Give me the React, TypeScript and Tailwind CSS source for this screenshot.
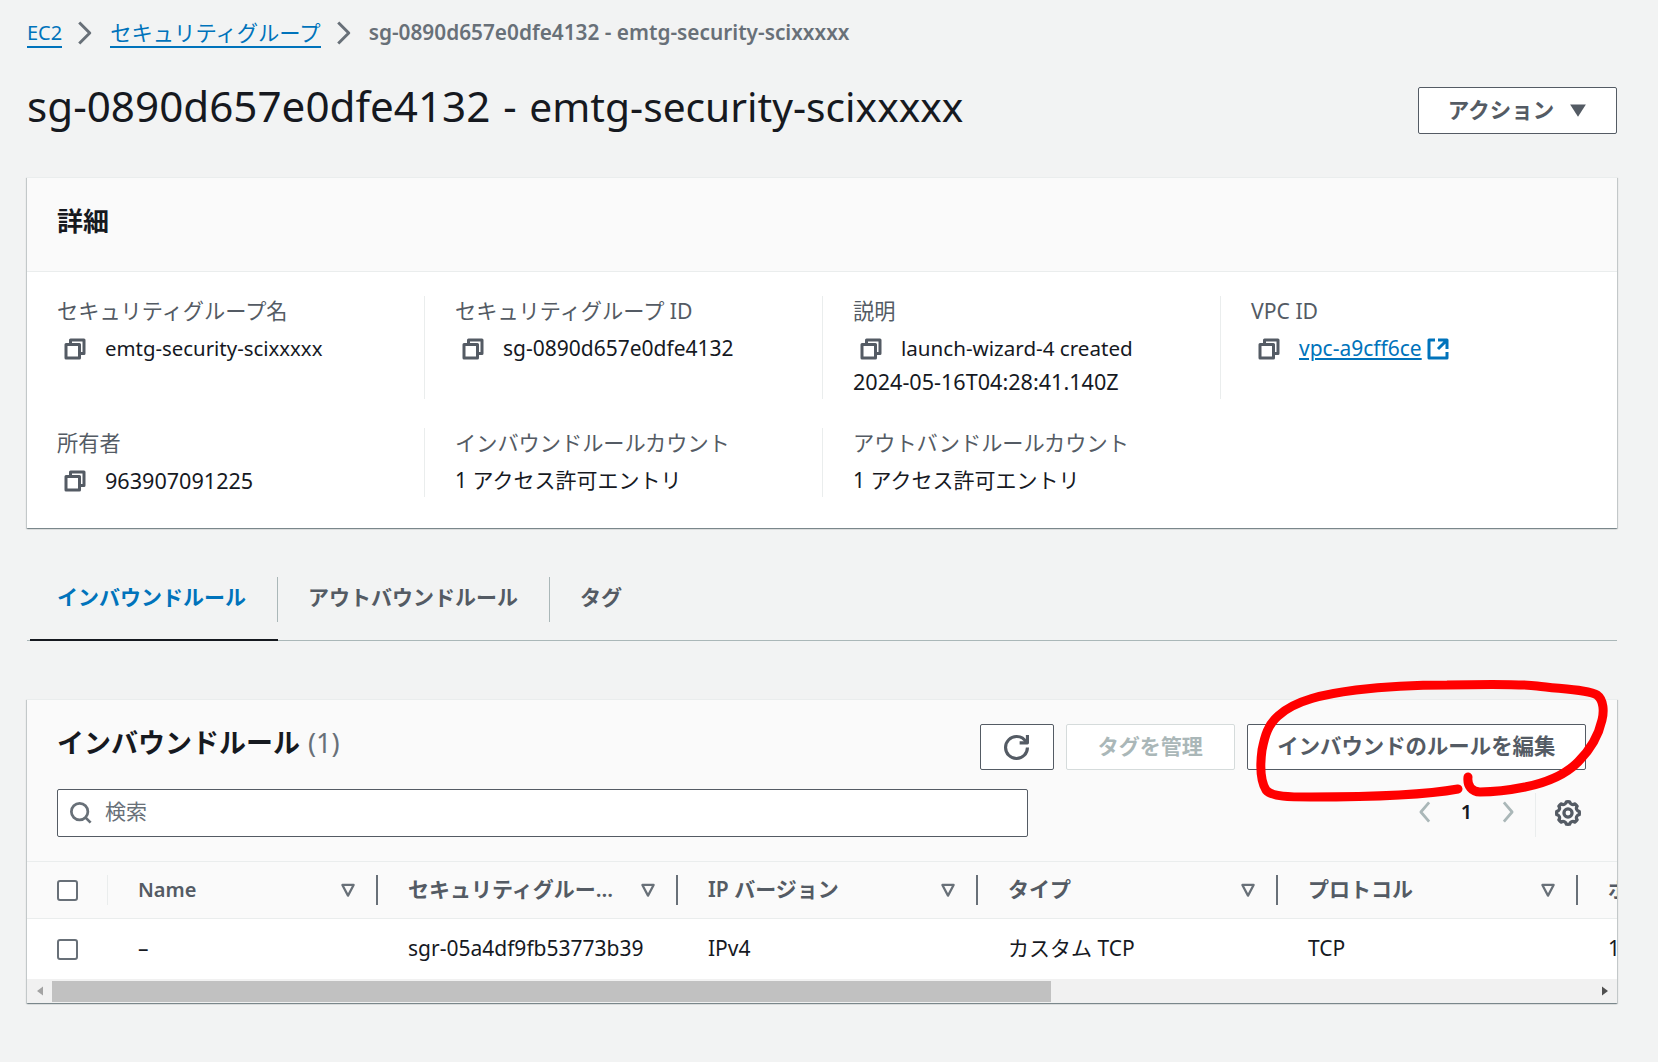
import { ReactNode } from 'react'

const FONT = "font-['Noto_Sans','Noto_Sans_CJK_JP',sans-serif]"
const CARD_SHADOW = 'shadow-[0_1px_1px_0_rgba(0,28,36,0.3),1px_1px_1px_0_rgba(0,28,36,0.15),-1px_1px_1px_0_rgba(0,28,36,0.15)]'

function Icon({ children, className }: { children: ReactNode; className?: string }) {
  return (
    <svg
      viewBox="0 0 16 16"
      fill="none"
      stroke="currentColor"
      strokeWidth={2}
      strokeLinejoin="round"
      className={className}
    >
      {children}
    </svg>
  )
}

function CopyIcon() {
  return (
    <Icon className="w-[24px] h-[24px] shrink-0 text-[#545b64]">
      <path d="M2 5h9v9H2z" />
      <path d="M5 5V2h9v9h-3" />
    </Icon>
  )
}

function ExternalIcon() {
  return (
    <Icon className="w-[24px] h-[24px] shrink-0">
      <path d="M14 8.01v-6H8M14.02 2 8 8.01M6 2.01H2v12h12v-3.99" />
    </Icon>
  )
}

function Chevron() {
  return (
    <Icon className="w-[24px] h-[24px] text-[#687078]">
      <path d="m3.5 1 7 7-7 7" />
    </Icon>
  )
}

function FilterIcon() {
  return (
    <Icon className="w-[18px] h-[18px] shrink-0 text-[#687078]">
      <path d="M3 3.5h10L8 13z" />
    </Icon>
  )
}

function Checkbox() {
  return <div className="w-[21px] h-[21px] rounded-[3px] border-2 border-[#687078] bg-white" />
}

// Details card cell
function Field({ label, children, divider = true }: { label: string; children: ReactNode; divider?: boolean }) {
  return (
    <div className={`px-[30px] ${divider ? 'border-r border-[#eaeded]' : ''}`}>
      <div className="h-[30px] flex items-center text-[21.2px] text-[#545b64] whitespace-nowrap">{label}</div>
      <div className="mt-[6px] text-[21px] leading-[33px] text-[#16191f]">{children}</div>
    </div>
  )
}

function CopyValue({ children }: { children: ReactNode }) {
  return (
    <span className="inline-flex items-center gap-[18px] pl-[6px] align-top h-[33px] whitespace-nowrap">
      <CopyIcon />
      {children}
    </span>
  )
}

const COLUMNS = ['セキュリティグルー...', 'IP バージョン', 'タイプ', 'プロトコル']
const CELLS = ['sgr-05a4df9fb53773b39', 'IPv4', 'カスタム TCP', 'TCP']

function HeaderCell({ label }: { label: string }) {
  return (
    <div className="w-[300px] shrink-0 h-[30px] pl-[30px] pr-[19px] flex items-center justify-between border-r-2 border-[#687078] text-[21px] font-semibold text-[#545b64]">
      <span className="whitespace-nowrap">{label}</span>
      <FilterIcon />
    </div>
  )
}

export default function App() {
  return (
    <div className={`${FONT} relative min-h-screen bg-[#f2f3f3] pl-[27px] pr-[41px] pt-[18px] pb-[57px]`}>
      {/* Breadcrumb */}
      <nav className="h-[30px] flex items-center text-[21.3px] whitespace-nowrap">
        <a className="text-[#0073bb] border-b-2 border-[#0073bb] leading-[27px] text-[20px]">EC2</a>
        <span className="mx-[12px] flex"><Chevron /></span>
        <a className="text-[#0073bb] border-b-2 border-[#0073bb] leading-[27px]">セキュリティグループ</a>
        <span className="mx-[12px] flex"><Chevron /></span>
        <span className="font-semibold text-[20.8px] text-[#687078]">sg-0890d657e0dfe4132 - emtg-security-scixxxxx</span>
      </nav>

      {/* Page title */}
      <div className="mt-[39px] h-[46px] flex items-center justify-between">
        <h1 className="pb-[8px] text-[41.6px] text-[#16191f] whitespace-nowrap">
          <span className="text-[42.2px]">sg-0890d657e0dfe4132</span>
          <span className="mx-[2px]"> - </span>
          <span className="text-[40.7px]">emtg-security-scixxxxx</span>
        </h1>
        <button className="w-[199px] h-[47px] flex items-center justify-center gap-[15px] bg-white border border-[#545b64] rounded-[2px] text-[21.5px] font-semibold text-[#545b64]">
          アクション
          <svg viewBox="0 0 16 16" className="w-[18px] h-[18px] text-[#545b64]" fill="currentColor"><path d="M1 3h14L8 14z" /></svg>
        </button>
      </div>

      {/* Details */}
      <section className={`mt-[44px] bg-white ${CARD_SHADOW}`}>
        <div className="h-[95px] pl-[30px] pb-[6px] flex items-center bg-[#fafafa] border-b border-[#eaeded] border-t border-t-[#eaeded]">
          <h2 className="text-[26px] font-bold text-[#16191f]">詳細</h2>
        </div>
        <div className="h-[256px] pt-[24px]">
          <div className="grid grid-cols-[398px_398px_398px_1fr] h-[102px]">
            <Field label="セキュリティグループ名"><CopyValue><span className="text-[20.4px]">emtg-security-scixxxxx</span></CopyValue></Field>
            <Field label="セキュリティグループ ID"><CopyValue>sg-0890d657e0dfe4132</CopyValue></Field>
            <Field label="説明">
              <CopyValue><span className="text-[20.6px]">launch-wizard-4 created</span></CopyValue>
              <br />
              <span className="text-[21.6px]">2024-05-16T04:28:41.140Z</span>
            </Field>
            <Field label="VPC ID" divider={false}>
              <CopyValue>
                <a className="flex items-center gap-[4px] text-[#0073bb]">
                  <span className="underline">vpc-a9cff6ce </span>
                  <ExternalIcon />
                </a>
              </CopyValue>
            </Field>
          </div>
          <div className="mt-[30px] grid grid-cols-[398px_398px_398px_1fr] h-[69px]">
            <Field label="所有者"><CopyValue><span className="text-[21.6px]">963907091225</span></CopyValue></Field>
            <Field label="インバウンドルールカウント">1 アクセス許可エントリ</Field>
            <Field label="アウトバンドルールカウント" divider={false}>1 アクセス許可エントリ</Field>
          </div>
        </div>
      </section>

      {/* Tabs */}
      <div className="mt-[49px] h-[64px] flex items-start border-b border-[#aab7b8] text-[21px] font-semibold whitespace-nowrap">
        <div className="ml-[3px] w-[248px] h-[64px] border-b-2 border-[#16191f] -mb-px">
          <div className="h-[45px] pl-[27px] pb-[4px] flex items-center text-[#0073bb] border-r border-[#aab7b8]">インバウンドルール</div>
        </div>
        <div className="w-[272px] h-[45px] pl-[30px] pb-[4px] flex items-center text-[#545b64] border-r border-[#aab7b8]">アウトバウンドルール</div>
        <div className="pl-[30px] pb-[4px] h-[45px] flex items-center text-[#545b64]">タグ</div>
      </div>

      {/* Inbound rules table */}
      <section className={`mt-[58px] bg-white overflow-hidden ${CARD_SHADOW}`}>
        <div className="h-[163px] bg-[#fafafa] border-t border-[#eaeded] border-b pl-[30px] pr-[31px] pt-[24px] flex justify-between">
          <div className="w-[971px]">
            <h2 className="h-[46px] pb-[8px] flex items-center text-[27px] font-bold text-[#16191f] whitespace-nowrap">
              インバウンドルール
              <span className="ml-[8px] font-normal text-[#687078]">(1)</span>
            </h2>
            <div className="mt-[19px] h-[48px] flex items-center gap-[13px] px-[12px] bg-white border border-[#545b64] rounded-[2px] text-[21px] text-[#687078]">
              <Icon className="w-[22px] h-[22px] text-[#687078]">
                <circle cx="7" cy="7" r="6" />
                <path d="m11 11 4 4" />
              </Icon>
              <span className="pb-[2px]">検索</span>
            </div>
          </div>
          <div className="w-[606px] -ml-[49px]">
            <div className="h-[46px] flex justify-end gap-[12px] text-[21px] font-semibold">
              <button className="w-[74px] flex items-center justify-center bg-white border border-[#545b64] rounded-[2px] text-[#545b64]">
                <Icon className="w-[25px] h-[25px]">
                  <path d="M10 5h5V0" />
                  <path d="M15 8a6.957 6.957 0 0 1-7 7 6.957 6.957 0 0 1-7-7 6.957 6.957 0 0 1 7-7 6.87 6.87 0 0 1 6.3 4" />
                </Icon>
              </button>
              <button className="w-[169px] bg-white border border-[#d5dbdb] rounded-[2px] text-[#aab7b8]">タグを管理</button>
              <button className="w-[340px] pb-[2px] bg-white border border-[#545b64] rounded-[2px] text-[21.4px] text-[#545b64]">インバウンドのルールを編集</button>
            </div>
            <div className="mt-[23px] h-[44px] flex items-center justify-end">
              <Icon className="w-[22px] h-[26px] mb-[6px] text-[#aab7b8]"><path d="M11 1 5 8l6 7" /></Icon>
              <span className="w-[61px] mb-[6px] text-center text-[20px] font-semibold text-[#16191f]">1</span>
              <Icon className="w-[22px] h-[26px] mb-[6px] text-[#aab7b8]"><path d="m5 1 6 7-6 7" /></Icon>
              <div className="ml-[16px] h-[44px] w-[20px] border-l border-[#eaeded]" />
              <Icon className="w-[26px] h-[26px] mb-[4px] mr-[5px] text-[#545b64]">
                <path d="M13.33 5.792a1.942 1.942 0 0 1 .287-1.97 6.984 6.984 0 0 0-1.44-1.439 1.943 1.943 0 0 1-3.159-1.308 7.037 7.037 0 0 0-2.037 0 1.943 1.943 0 0 1-3.158 1.308 6.97 6.97 0 0 0-1.44 1.44 1.943 1.943 0 0 1-1.308 3.158 7.037 7.037 0 0 0 0 2.037 1.943 1.943 0 0 1 1.308 3.159 6.97 6.97 0 0 0 1.44 1.439 1.942 1.942 0 0 1 3.159 1.308 7.037 7.037 0 0 0 2.036 0 1.942 1.942 0 0 1 3.159-1.308 6.984 6.984 0 0 0 1.44-1.44 1.943 1.943 0 0 1 1.308-3.158 7.037 7.037 0 0 0 0-2.037 1.943 1.943 0 0 1-1.596-1.189Z" />
                <circle cx="8" cy="8" r="2.5" />
              </Icon>
            </div>
          </div>
        </div>

        <div className="h-[57px] bg-[#fafafa] border-b border-[#eaeded] flex items-center overflow-hidden">
          <div className="w-[81px] shrink-0 h-[30px] pl-[30px] flex items-center border-r border-[#eaeded]">
            <Checkbox />
          </div>
          <div className="w-[270px] shrink-0 h-[30px] pl-[30px] pr-[19px] flex items-center justify-between border-r-2 border-[#687078] text-[20px] font-semibold text-[#545b64]">
            Name
            <FilterIcon />
          </div>
          {COLUMNS.map((label) => (
            <HeaderCell key={label} label={label} />
          ))}
          <div className="pl-[30px] text-[21px] font-semibold text-[#545b64] whitespace-nowrap">ポート範囲</div>
        </div>

        <div className="h-[60px] flex items-center overflow-hidden text-[21px] text-[#16191f]">
          <div className="w-[81px] shrink-0 pl-[30px] flex items-center"><Checkbox /></div>
          <div className="w-[270px] shrink-0 pl-[30px]">–</div>
          {CELLS.map((cell) => (
            <div key={cell} className="w-[300px] shrink-0 pl-[30px] whitespace-nowrap">{cell}</div>
          ))}
          <div className="pl-[30px]">1</div>
        </div>

        {/* Scrollbar */}
        <div className="h-[24px] bg-[#f1f1f1] flex items-center">
          <div className="w-[25px] flex justify-center">
            <svg viewBox="0 0 8 12" className="w-[6px] h-[10px] text-[#a3a3a3]" fill="currentColor"><path d="M8 0v12L0 6z" /></svg>
          </div>
          <div className="w-[999px] h-[21px] bg-[#c1c1c1]" />
          <div className="ml-auto w-[25px] flex justify-center">
            <svg viewBox="0 0 8 12" className="w-[6px] h-[10px] text-[#505050]" fill="currentColor"><path d="M0 0v12l8-6z" /></svg>
          </div>
        </div>
      </section>

      {/* Red hand-drawn annotation */}
      <svg className="absolute left-0 top-0 w-[1658px] h-[1062px] pointer-events-none" viewBox="0 0 1658 1062" fill="none">
        <path
          d="M1458 789C1425 795 1370 797 1311 797C1290 797 1272 797 1266 790C1260 780 1260 765 1262 750C1265 735 1268 725 1278 716C1295 700 1325 694 1356 690C1390 686 1420 685 1447 685C1490 684 1520 684 1537 686C1560 689 1590 690 1597 695C1604 700 1604 712 1602 720C1598 738 1590 750 1578 762C1565 775 1545 783 1525 787C1510 790 1495 792 1480 792C1472 792 1467 786 1468 777"
          stroke="#ff0000"
          strokeWidth={9}
          strokeLinecap="round"
          strokeLinejoin="round"
        />
      </svg>
    </div>
  )
}
